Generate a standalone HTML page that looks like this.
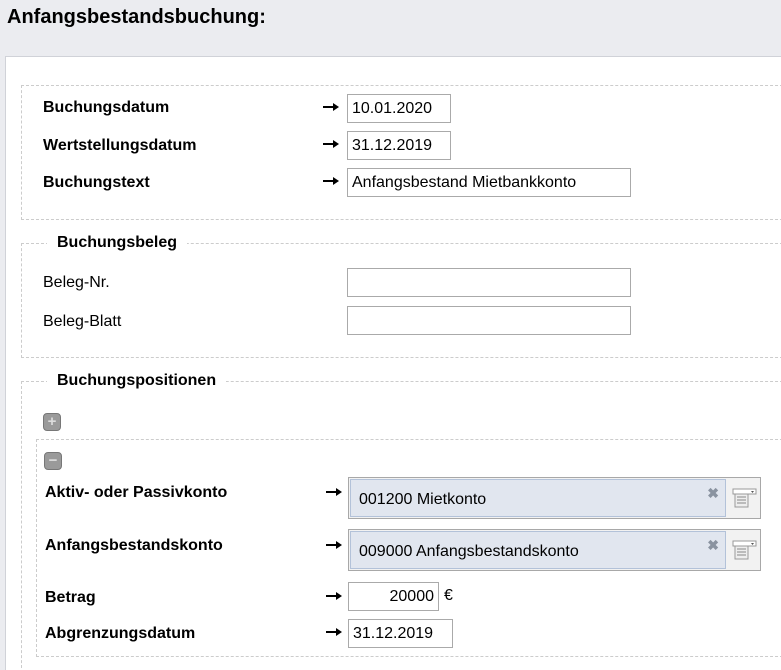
<!DOCTYPE html>
<html><head><meta charset="utf-8"><style>
html,body{margin:0;width:781px;height:670px;overflow:hidden}
body{background:#ebecf0;font-family:"Liberation Sans",Arial,sans-serif;color:#000;position:relative}
.a{position:absolute}
h1{position:absolute;left:7px;top:6px;margin:0;font-size:20px;font-weight:bold}
.panel{position:absolute;left:5px;top:56px;width:790px;height:630px;background:#fff;border:1px solid #d0d2d8}
.fs{position:absolute;border:1px dashed #ccc}
.lbl{position:absolute;font-size:16px}
.b{font-weight:bold}
.in{position:absolute;border:1px solid #aaa;background:#fff;font-size:16px;box-sizing:border-box;padding:0 4px;line-height:27px;height:29px}
.arr{position:absolute;width:16px;height:10px}
.leg{position:absolute;background:#fff;padding:0 10px;font-size:16px;font-weight:bold}
.btn{position:absolute;width:18px;height:18px;background:#9a9a9a;border:1px solid #777;border-radius:4px;box-sizing:border-box;color:#ddd;font-size:15px;line-height:15px;text-align:center;font-weight:bold}
.combo{position:absolute;left:348px;width:413px;height:42px;border:1px solid #a8a8a8;box-sizing:border-box;background:#f2f2f2}
.combo .f{position:absolute;left:1px;top:1px;width:376px;height:38px;background:#e1e6ef;border:1px solid #b3c2d9;box-sizing:border-box;font-size:16px;line-height:40px;padding-left:8px}
.combo .x{position:absolute;right:6px;top:0;line-height:26px;font-size:14px;color:#8a93a0;font-weight:bold}
</style></head><body>
<h1>Anfangsbestandsbuchung:</h1>
<div class="panel"></div>
<svg width="0" height="0" style="position:absolute"><defs><g id="ar"><path d="M0 5h12" stroke="#000" stroke-width="2"/><path d="M10 1l6 4-6 4z" fill="#000"/></g></defs></svg>
<div class="fs" style="left:21px;top:85px;width:780px;height:133px"></div>
<div class="lbl b" style="left:43px;top:99px">Buchungsdatum</div>
<div class="lbl b" style="left:43px;top:137px">Wertstellungsdatum</div>
<div class="lbl b" style="left:43px;top:174px">Buchungstext</div>
<svg class="arr" style="left:323px;top:102px"><use href="#ar"/></svg>
<svg class="arr" style="left:323px;top:139px"><use href="#ar"/></svg>
<svg class="arr" style="left:323px;top:176px"><use href="#ar"/></svg>
<div class="in" style="left:347px;top:94px;width:104px">10.01.2020</div>
<div class="in" style="left:347px;top:131px;width:104px">31.12.2019</div>
<div class="in" style="left:347px;top:168px;width:284px">Anfangsbestand Mietbankkonto</div>

<div class="fs" style="left:21px;top:243px;width:780px;height:113px"></div>
<div class="leg" style="left:47px;top:234px">Buchungsbeleg</div>
<div class="lbl" style="left:43px;top:274px">Beleg-Nr.</div>
<div class="lbl" style="left:43px;top:313px">Beleg-Blatt</div>
<div class="in" style="left:347px;top:268px;width:284px"></div>
<div class="in" style="left:347px;top:306px;width:284px"></div>

<div class="fs" style="left:21px;top:381px;width:780px;height:300px"></div>
<div class="leg" style="left:47px;top:372px">Buchungspositionen</div>
<div class="btn" style="left:43px;top:413px">+</div>
<div class="fs" style="left:36px;top:439px;width:760px;height:216px"></div>
<div class="btn" style="left:44px;top:452px">−</div>
<div class="lbl b" style="left:45px;top:484px">Aktiv- oder Passivkonto</div>
<div class="lbl b" style="left:45px;top:537px">Anfangsbestandskonto</div>
<div class="lbl b" style="left:45px;top:589px">Betrag</div>
<div class="lbl b" style="left:45px;top:625px">Abgrenzungsdatum</div>
<svg class="arr" style="left:326px;top:487px"><use href="#ar"/></svg>
<svg class="arr" style="left:326px;top:540px"><use href="#ar"/></svg>
<svg class="arr" style="left:326px;top:591px"><use href="#ar"/></svg>
<svg class="arr" style="left:326px;top:627px"><use href="#ar"/></svg>
<div class="combo" style="top:477px"><div class="f">001200 Mietkonto<span class="x">✖</span></div>
<svg class="a" style="left:383px;top:9px" width="26" height="22"><rect x="1" y="2" width="23" height="5" fill="#fff" stroke="#999"/><path d="M19 4h3l-1.5 2z" fill="#555"/><rect x="3" y="7" width="13" height="13" fill="#eee" stroke="#999"/><path d="M5 10h9M5 13h9M5 16h9" stroke="#888"/></svg></div>
<div class="combo" style="top:529px"><div class="f">009000 Anfangsbestandskonto<span class="x">✖</span></div>
<svg class="a" style="left:383px;top:9px" width="26" height="22"><rect x="1" y="2" width="23" height="5" fill="#fff" stroke="#999"/><path d="M19 4h3l-1.5 2z" fill="#555"/><rect x="3" y="7" width="13" height="13" fill="#eee" stroke="#999"/><path d="M5 10h9M5 13h9M5 16h9" stroke="#888"/></svg></div>
<div class="in" style="left:348px;top:582px;width:91px;text-align:right">20000</div>
<div class="lbl" style="left:444px;top:587px">€</div>
<div class="in" style="left:348px;top:619px;width:105px">31.12.2019</div>
</body></html>
